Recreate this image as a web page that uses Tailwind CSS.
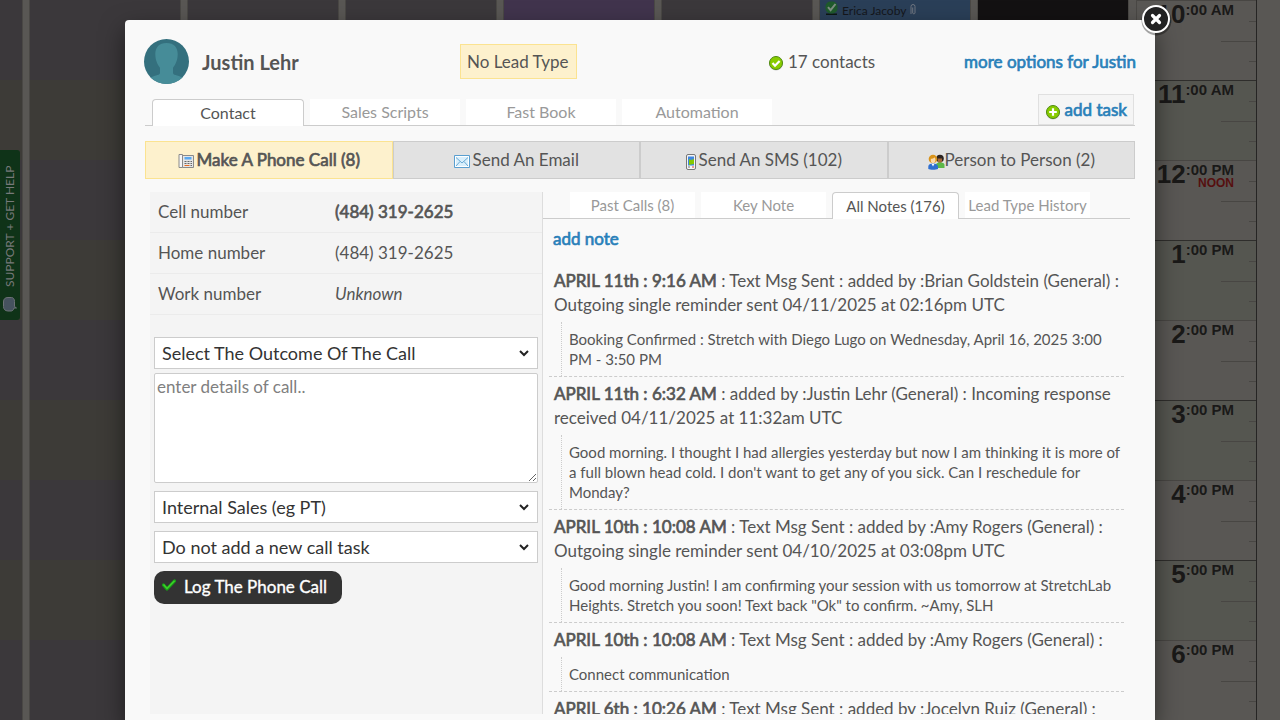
<!DOCTYPE html>
<html lang="en">
<head>
<meta charset="utf-8">
<meta name="viewport" content="width=device-width, initial-scale=1">
<title>Justin Lehr – Contact</title>
<script src="https://cdn.jsdelivr.net/npm/@tailwindcss/browser@4"></script>
</head>
<body class="font-['Lato',sans-serif] text-[#555] text-[17px] leading-6">
<div class="relative h-screen overflow-hidden">

  <!-- Dimmed calendar behind the dialog -->
  <div class="absolute inset-0 flex bg-[#3b383b]" aria-hidden="true">
    <div class="flex flex-1 bg-[repeating-linear-gradient(to_bottom,#3b383b_0px,#3b383b_80px,#3d3b37_80px,#3d3b37_160px)]">
      <div class="w-[22px]"></div>
      <div class="w-2 border-x border-[#4a4845] bg-[#595754]"></div>
      <div class="w-[150px]"></div>
      <div class="w-2 border-x border-[#4a4845] bg-[#595754]"></div>
      <div class="w-[150px]"></div>
      <div class="w-2 border-x border-[#4a4845] bg-[#595754]"></div>
      <div class="w-[150px]"></div>
      <div class="w-2 border-x border-[#4a4845] bg-[#595754]"></div>
      <div class="w-[150px]"><div class="h-16 bg-[#41344d]"></div></div>
      <div class="w-2 border-x border-[#4a4845] bg-[#595754]"></div>
      <div class="w-[150px]"></div>
      <div class="w-2 border-x border-[#4a4845] bg-[#595754]"></div>
      <div class="w-[150px]">
        <div class="flex h-16 items-start gap-1 bg-[#2a3f58] pt-[2px] pl-[5px] text-xs leading-[18px] text-[#15171c]">
          <svg class="mt-[-1px]" width="13" height="14" viewBox="0 0 13 14"><path d="M1 12.5h11v1.5H1z" fill="#0c1810"/><rect x=".5" y=".5" width="12" height="12" rx="5" fill="#1f5a2c"/><path d="M3 6.2l2.6 3L10.5 3" fill="none" stroke="#7e8e82" stroke-width="2"/></svg>
          <span>Erica Jacoby</span>
          <svg class="mt-[2px]" width="6" height="12" viewBox="0 0 6 12"><path d="M1 10V2.5a2 2 0 0 1 4 0V9a1.2 1.2 0 0 1-2.3 0V3.5" fill="none" stroke="#6f7680" stroke-width="1"/></svg>
        </div>
      </div>
      <div class="w-2 border-x border-[#4a4845] bg-[#595754]"></div>
      <div class="w-[150px]"><div class="h-16 bg-[#131112]"></div></div>
      <div class="w-2 border-l border-[#4a4845] bg-[#595754]"></div>
    </div>
    <div id="hours" class="w-[121px] border-r border-l border-r-[#262524] border-l-[#4a4845] font-['Liberation_Sans',sans-serif] font-bold text-[#1a1918]"></div>
    <div class="w-[23px] bg-[#595754]"></div>
  </div>

  <!-- Support tab -->
  <a href="#" class="absolute top-[150px] left-0 flex h-[170px] w-5 rotate-180 items-center gap-[10px] rounded-l-[3px] bg-[#0f3318] pt-2 text-xs leading-5 whitespace-nowrap text-[#77797a] [writing-mode:vertical-rl]">
    <svg class="shrink-0 rotate-180" width="14" height="15" viewBox="0 0 14 15"><path d="M5 .5h3.500c2 0 3 1.800 3 4V9.500l2 1.500h-2.500c-.5 2-1.500 3-3 3H5C2 14 .5 12 .5 9.500V5C.5 2 2 .5 5 .5z" fill="#46525f" stroke="#6c7276"/></svg>
    <span>SUPPORT + GET HELP</span>
  </a>

  <!-- Dialog -->
  <div class="px-[125px] pt-5">
    <main role="dialog" aria-label="Justin Lehr" class="relative flex h-[calc(100vh-20px)] flex-col rounded-t bg-[#f9f9f9] px-5 pb-[6px] shadow-[0_10px_25px_rgba(0,0,0,0.5)]">
      <button type="button" aria-label="Close" class="absolute -top-[18px] -right-5 size-9">
        <svg width="36" height="36" viewBox="0 0 36 36"><circle cx="17.500" cy="18.500" r="15" fill="#000" opacity=".35"/><circle cx="17" cy="17" r="13" fill="#222" stroke="#fff" stroke-width="2"/><path d="M13.500 13.500l7 7M20.500 13.500l-7 7" stroke="#fff" stroke-width="3.200" stroke-linecap="round"/></svg>
      </button>

      <header class="grid grid-cols-[315px_308px_1fr] items-center pt-[19px]">
        <div class="-ml-px flex items-center gap-[13px]">
          <svg width="45" height="45" viewBox="0 0 45 45"><defs><clipPath id="av"><circle cx="22.500" cy="22.500" r="22.500"/></clipPath></defs><g clip-path="url(#av)"><path d="M0 0h45v45H0z" fill="#34707e"/><path d="M22.500 4C15 4 11.300 8.500 11.300 15c0 6.500 2.300 10.500 4.700 13.800V34c-.2 1.500-2 2-4 2.500-2.500.6-4.800 1.300-7 3.500v5h35v-5c-2.200-2.200-4.500-2.900-7-3.500-2-.5-3.800-1-4-2.500v-5.200c2.400-3.300 4.700-7.300 4.700-13.800C33.700 8.500 30 4 22.500 4z" fill="#468c98"/></g></svg>
          <h1 class="text-[20px] font-bold">Justin Lehr</h1>
        </div>
        <div><span class="inline-block border border-[#fbe391] bg-[#fdf1cd] py-[5px] pr-2 pl-[6px] leading-[23px]">No Lead Type</span></div>
        <div class="flex items-center justify-between">
          <span class="flex items-center gap-1">
            <svg class="mt-[2px]" width="16" height="16" viewBox="0 0 16 16"><ellipse cx="8" cy="9" rx="7" ry="6.500" fill="#999" opacity=".5"/><circle cx="8" cy="8" r="6.500" fill="#8c0" stroke="#4f8a10"/><path d="M4.500 8l2.500 2.700L11.600 6" fill="none" stroke="#fff" stroke-width="2.200"/></svg>
            17 contacts</span>
          <a href="#" class="-mr-px text-[#2980b9] [-webkit-text-stroke:0.04em_#2980b9]">more options for Justin</a>
        </div>
      </header>

      <nav class="mt-[10px] flex items-end border-b border-[#ccc] pl-[7px] text-base leading-[26px]">
        <div class="flex flex-1 items-end gap-[6px]">
          <button type="button" class="-mb-px w-[152px] rounded-t border border-b-0 border-[#ccc] bg-white">Contact</button>
          <button type="button" class="w-[150px] bg-white text-[#999]">Sales Scripts</button>
          <button type="button" class="w-[150px] bg-white text-[#999]">Fast Book</button>
          <button type="button" class="w-[150px] bg-white text-[#999]">Automation</button>
        </div>
        <a href="#" class="mr-px flex items-center gap-1 border border-[#e0e0e0] bg-[#f5f5f5] px-[6px] text-[17px] leading-[29px] text-[#2980b9] [-webkit-text-stroke:0.04em_#2980b9]">
          <svg class="mt-[5px]" width="16" height="16" viewBox="0 0 16 16"><ellipse cx="8" cy="9" rx="7" ry="6.500" fill="#999" opacity=".5"/><circle cx="8" cy="8" r="6.500" fill="#8c0" stroke="#4f8a10"/><path d="M8 4.200v7.600M4.200 8h7.600" stroke="#fff" stroke-width="2.200"/></svg>add task</a>
      </nav>

      <nav class="mt-[15px] grid grid-cols-4 leading-9">
        <button type="button" class="flex items-center justify-center gap-[3px] border border-[#fbe391] bg-[#fdf1cd] [-webkit-text-stroke:0.04em_#555]">
          <svg class="mt-[2px]" width="16" height="16" viewBox="0 0 16 16"><path d="M4.500 2.500h11v12h-11z" fill="#e6e6e6" stroke="#8a8a8a"/><path d="M1 1.500h3.500v13H1z" fill="#f6f6f6" stroke="#8a8a8a"/><path d="M6.500 4h7v2.500h-7z" fill="#5aa9f0"/><path d="M6.500 8.500h2M9.500 8.500h2M12.500 8.500h1.500M6.500 10.500h2M9.500 10.500h2M12.500 10.500h1.500" stroke="#666"/><path d="M12.500 12.500h1.500" stroke="#666"/><path d="M6.500 12.500h5" stroke="#e86a20"/></svg>
          Make A Phone Call (8)</button>
        <button type="button" class="flex items-center justify-center gap-[3px] border border-[#ccc] bg-[#e2e2e2]">
          <svg class="mt-[2px]" width="16" height="13" viewBox="0 0 16 13"><path d="M.5.5h15v12H.5z" fill="#d9effc" stroke="#5a9fd0"/><path d="M1.500 1.500h13v10h-13z" fill="none" stroke="#fff"/><path d="M2 2.500l6 5.500 6-5.500M2 11l4-4.500M14 11l-4-4.500" fill="none" stroke="#6aaad4"/></svg>
          Send An Email</button>
        <button type="button" class="flex items-center justify-center gap-[3px] border border-[#ccc] bg-[#e2e2e2]">
          <svg class="mt-[3px]" width="10" height="16" viewBox="0 0 10 16"><rect x=".5" y=".5" width="9" height="15" rx="1.500" fill="#f4f4f4" stroke="#777"/><path d="M2 2.500h6v9H2z" fill="#3d86e0"/><path d="M3 5l2 1 3-1v5l-3 .5L3 11z" fill="#86c800"/><path d="M2 13h2" stroke="#777"/><path d="M6 13h2" stroke="#e04040"/></svg>
          Send An SMS (102)</button>
        <button type="button" class="flex items-center justify-center border border-[#ccc] bg-[#e2e2e2]">
          <svg class="mt-[3px]" width="17" height="16" viewBox="0 0 17 16"><circle cx="12" cy="4.500" r="3.800" fill="#2c2420"/><path d="M9.800 4.500h4.200v2.500c0 1.500-1 2.300-2.100 2.300S9.800 8.500 9.800 7z" fill="#a86a3c"/><path d="M8 14V11c0-2 2-2.500 4-2.500s4.500.5 4.500 2.500v3z" fill="#5cb848"/><circle cx="5" cy="5" r="4.300" fill="#d9931a"/><path d="M2.800 4.800c1.500 0 3-.5 3.600-1.500l1 1.500v2c0 1.500-1.100 2.500-2.400 2.500S2.800 8.300 2.800 6.800z" fill="#fbd9a8"/><path d="M.3 15v-2.500c0-2 2-3 4.700-3s5 1 5 3V15c-2 1-8 1-9.700 0z" fill="#2f6fd0"/><path d="M3.500 9.700L5 12.500l1.500-2.800z" fill="#fff"/></svg>
          Person to Person (2)</button>
      </nav>

      <div class="mt-[13px] flex min-h-0 flex-1 px-[5px]">
        <section class="w-[393px] shrink-0 border-r border-[#ddd] bg-[#f4f4f4]">
          <table class="w-full text-left">
            <tbody>
              <tr class="h-10 border-b border-[#ebebeb]"><th scope="row" class="w-[185px] pl-2 font-normal">Cell number</th><td class="[-webkit-text-stroke:0.04em_#555]">(484) 319-2625</td></tr>
              <tr class="h-[41px] border-b border-[#ebebeb]"><th scope="row" class="pl-2 font-normal">Home number</th><td>(484) 319-2625</td></tr>
              <tr class="h-[41px] border-b border-[#ebebeb]"><th scope="row" class="pl-2 font-normal">Work number</th><td class="italic">Unknown</td></tr>
            </tbody>
          </table>
          <form class="mt-[22px] flex flex-col px-1 text-[#333]">
            <div class="relative">
              <select aria-label="Outcome" class="block h-8 w-full appearance-none border border-[#ccc] bg-white px-[7px] text-lg leading-6"><option>Select The Outcome Of The Call</option></select>
              <svg class="pointer-events-none absolute top-[13px] right-[9px]" width="10" height="7" viewBox="0 0 10 7"><path d="M1 1l4 4 4-4" fill="none" stroke="#222" stroke-width="2"/></svg>
            </div>
            <textarea aria-label="Details" placeholder="enter details of call.." class="mt-1 block h-[110px] w-full rounded-xs border border-[#ccc] bg-white p-[2px] leading-[22px] placeholder:text-[#808080]"></textarea>
            <div class="relative mt-2">
              <select aria-label="Call type" class="block h-8 w-full appearance-none border border-[#ccc] bg-white px-[7px] text-lg leading-6"><option>Internal Sales (eg PT)</option></select>
              <svg class="pointer-events-none absolute top-[13px] right-[9px]" width="10" height="7" viewBox="0 0 10 7"><path d="M1 1l4 4 4-4" fill="none" stroke="#222" stroke-width="2"/></svg>
            </div>
            <div class="relative mt-2">
              <select aria-label="New call task" class="block h-8 w-full appearance-none border border-[#ccc] bg-white px-[7px] text-lg leading-6"><option>Do not add a new call task</option></select>
              <svg class="pointer-events-none absolute top-[13px] right-[9px]" width="10" height="7" viewBox="0 0 10 7"><path d="M1 1l4 4 4-4" fill="none" stroke="#222" stroke-width="2"/></svg>
            </div>
            <button type="button" class="mt-2 flex h-[33px] items-center gap-2 self-start rounded-[10px] bg-[#333] pr-[15px] pl-2 text-white">
              <svg class="mb-1" width="14" height="12" viewBox="0 0 14 12"><path d="M1.500 6l3.500 4L12.500 2" fill="none" stroke="#17a017" stroke-width="3.200" stroke-linejoin="round" stroke-linecap="round"/><path d="M1.500 5.500l3.500 4L12.500 1.800" fill="none" stroke="#3fd02a" stroke-width="1.500"/></svg>
              <span class="[-webkit-text-stroke:0.02em_#fff]">Log The Phone Call</span></button>
          </form>
        </section>

        <section class="flex min-w-0 flex-1 flex-col overflow-hidden">
          <nav class="flex items-end gap-[6px] border-b border-[#ccc] pl-[27px] text-[15px] leading-[26px] whitespace-nowrap">
            <button type="button" class="w-[125px] bg-white text-[#999]">Past Calls (8)</button>
            <button type="button" class="w-[125px] bg-white text-[#999]">Key Note</button>
            <button type="button" class="-mb-px w-[127px] rounded-t border border-b-0 border-[#ccc] bg-white">All Notes (176)</button>
            <button type="button" class="w-[125px] bg-white text-[#999]">Lead Type History</button>
          </nav>
          <div class="pt-2 pb-[13px] pl-[10px]"><a href="#" class="text-[#2980b9] [-webkit-text-stroke:0.04em_#2980b9]">add note</a></div>
          <div class="min-h-0 flex-1 overflow-hidden px-[6px]">
            <article class="border-b border-dashed border-[#ccc] pt-[5px] pl-[5px]"><p><span class="[-webkit-text-stroke:0.04em_#555]">APRIL 11th : 9:16 AM</span> : Text Msg Sent : added by :Brian Goldstein (General) : Outgoing single reminder sent 04/11/2025 at 02:16pm UTC</p>
              <p class="mt-[5px] ml-[7px] border-l border-dotted border-[#ccc] py-[7px] pl-[7px] text-[15px] leading-5">Booking Confirmed : Stretch with Diego Lugo on Wednesday, April 16, 2025 3:00 PM - 3:50 PM</p></article>
            <article class="border-b border-dashed border-[#ccc] pt-[5px] pl-[5px]"><p><span class="[-webkit-text-stroke:0.04em_#555]">APRIL 11th : 6:32 AM</span> : added by :Justin Lehr (General) : Incoming response received 04/11/2025 at 11:32am UTC</p>
              <p class="mt-[5px] ml-[7px] border-l border-dotted border-[#ccc] py-[7px] pl-[7px] text-[15px] leading-5">Good morning. I thought I had allergies yesterday but now I am thinking it is more of a full blown head cold. I don't want to get any of you sick. Can I reschedule for Monday?</p></article>
            <article class="border-b border-dashed border-[#ccc] pt-[5px] pl-[5px]"><p><span class="[-webkit-text-stroke:0.04em_#555]">APRIL 10th : 10:08 AM</span> : Text Msg Sent : added by :Amy Rogers (General) : Outgoing single reminder sent 04/10/2025 at 03:08pm UTC</p>
              <p class="mt-[5px] ml-[7px] border-l border-dotted border-[#ccc] py-[7px] pl-[7px] text-[15px] leading-5">Good morning Justin! I am confirming your session with us tomorrow at StretchLab Heights. Stretch you soon! Text back "Ok" to confirm. ~Amy, SLH</p></article>
            <article class="border-b border-dashed border-[#ccc] pt-[5px] pl-[5px]"><p><span class="[-webkit-text-stroke:0.04em_#555]">APRIL 10th : 10:08 AM</span> : Text Msg Sent : added by :Amy Rogers (General) :</p>
              <p class="mt-[5px] ml-[7px] border-l border-dotted border-[#ccc] py-[7px] pl-[7px] text-[15px] leading-5">Connect communication</p></article>
            <article class="pt-[5px] pl-[5px]"><p><span class="[-webkit-text-stroke:0.04em_#555]">APRIL 6th : 10:26 AM</span> : Text Msg Sent : added by :Jocelyn Ruiz (General) :</p></article>
          </div>
        </section>
      </div>
    </main>
  </div>
</div>
<script>
  // Hour rows of the day ruler
  const rows = [['10', 'AM'], ['11', 'AM'], ['12', 'PM'], ['1', 'PM'], ['2', 'PM'], ['3', 'PM'], ['4', 'PM'], ['5', 'PM'], ['6', 'PM']];
  document.getElementById('hours').innerHTML = rows.map(([h, m], i) => `
    <div class="${i % 2 ? 'relative h-20 border-t border-[#2f2e2c] bg-[#555650] pr-[22px]' : 'relative h-20 border-t border-[#484643] bg-[#595754] pr-[22px]'}">
      <div class="flex items-start justify-end pt-px">
        <span class="text-[26px] leading-6">${h}</span>
        <div class="flex flex-col items-end"><span class="text-[15px] leading-[15px]">:00 ${m}</span>${h === '12' ? '<span class="text-xs leading-3 text-[#560f0f]">NOON</span>' : ''}</div>
      </div>
      <i class="absolute top-5 right-0 h-px w-[7px] bg-[#484643]"></i>
      <i class="absolute top-10 right-0 h-px w-[35px] bg-[#484643]"></i>
      <i class="absolute top-[60px] right-0 h-px w-[7px] bg-[#484643]"></i>
    </div>`).join('');
</script>
</body>
</html>
